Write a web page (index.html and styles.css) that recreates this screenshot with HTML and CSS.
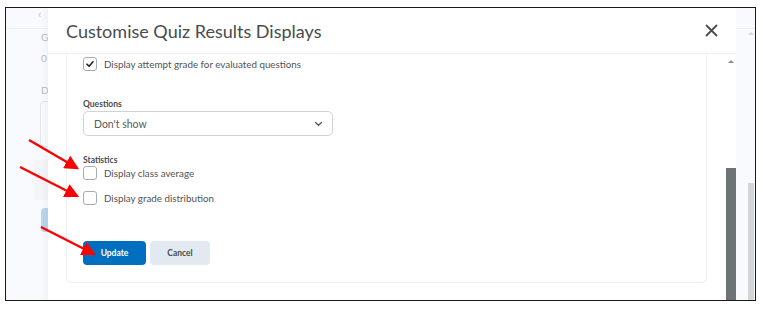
FILE: index.html
```html
<!DOCTYPE html>
<html lang="en">
<head>
    <meta charset="UTF-8">
    <meta name="viewport" content="width=device-width, initial-scale=1.0">
    <title>Customise Quiz Results Displays</title>
    <link rel="stylesheet" href="styles.css">
</head>
<body>
    <div class="frame">
        <div class="page-left">
            <span class="back">&lsaquo;</span>
            <span class="faint-line"></span>
            <span class="faint-letter l-g">G</span>
            <span class="faint-letter l-0">0</span>
            <span class="faint-letter l-d">D</span>
            <span class="faint-box"></span>
            <span class="faint-row"></span>
            <span class="faint-button"></span>
        </div>

        <div class="dialog">
            <div class="dialog-header">
                <h1>Customise Quiz Results Displays</h1>
                <button class="close" aria-label="Close">
                    <svg width="13" height="13" viewBox="0 0 13 13">
                        <path d="M1.5 1.5 L11.5 11.5 M11.5 1.5 L1.5 11.5" stroke="#494c4e" stroke-width="1.8" stroke-linecap="round" fill="none"/>
                    </svg>
                </button>
            </div>

            <div class="dialog-body">
                <div class="scroll-content">
                    <div class="card">
                        <label class="check-row">
                            <span class="checkbox checked">
                                <svg width="10" height="10" viewBox="0 0 10 10">
                                    <path d="M2 5.2 L4.1 7.3 L8 2.8" stroke="#202122" stroke-width="1.6" stroke-linecap="round" stroke-linejoin="round" fill="none"/>
                                </svg>
                            </span>
                            Display attempt grade for evaluated questions
                        </label>

                        <div class="field-label questions-label">Questions</div>
                        <div class="select">
                            <span>Don't show</span>
                            <svg width="9" height="6" viewBox="0 0 9 6">
                                <path d="M1.5 1.5 L4.5 4.3 L7.5 1.5" stroke="#565a5c" stroke-width="1.3" stroke-linecap="round" fill="none"/>
                            </svg>
                        </div>

                        <div class="field-label stats-label">Statistics</div>
                        <label class="check-row">
                            <span class="checkbox"></span>
                            Display class average
                        </label>
                        <label class="check-row second">
                            <span class="checkbox"></span>
                            Display grade distribution
                        </label>

                        <div class="buttons">
                            <button class="btn primary">Update</button>
                            <button class="btn">Cancel</button>
                        </div>
                    </div>
                </div>
                <div class="scrollbar">
                    <span class="arrow-up"></span>
                    <span class="thumb"></span>
                </div>
            </div>
        </div>

        <div class="page-right">
            <span class="faint-line"></span>
            <span class="arrow-up small"></span>
            <span class="thumb"></span>
        </div>

        <svg class="arrows" width="751" height="294" viewBox="0 0 751 294">
            <defs>
                <marker id="head" markerWidth="6" markerHeight="6" refX="5" refY="3" orient="auto" markerUnits="strokeWidth">
                    <path d="M0 0 L6 3 L0 6 Z" fill="#ff0000"/>
                </marker>
            </defs>
            <line x1="23" y1="132" x2="71" y2="160" stroke="#ff0000" stroke-width="2.4" marker-end="url(#head)"/>
            <line x1="14" y1="159" x2="71" y2="188" stroke="#ff0000" stroke-width="2.4" marker-end="url(#head)"/>
            <line x1="35" y1="219" x2="88" y2="246" stroke="#ff0000" stroke-width="2.4" marker-end="url(#head)"/>
        </svg>
    </div>
</body>
</html>
```

FILE: styles.css
```css
body {
    margin: 0;
    background-color: #fff;
    font-family: Lato, "Open Sans", Arial, sans-serif;
    color: #494c4e;
}

.frame {
    position: relative;
    display: flex;
    width: 749px;
    height: 292px;
    margin: 7px 0 0 5px;
    border: 1px solid #1a1a1a;
    background-color: #f9fafd;
    overflow: hidden;
}

/* page behind the dialog, mostly cut off */
.page-left {
    position: relative;
    width: 42px;
    flex-shrink: 0;
}

.page-left .back {
    position: absolute;
    left: 32px;
    top: 0;
    font-size: 12px;
    line-height: 12px;
    color: #c4c8cc;
}

.faint-line {
    position: absolute;
    left: 0;
    right: 0;
    top: 20px;
    border-top: 1px solid #eef0f3;
}

.faint-letter {
    position: absolute;
    left: 35px;
    font-size: 10px;
    color: #b8bcc0;
}

.l-g { top: 23px; }
.l-0 { top: 44px; }
.l-d { top: 76px; }

.faint-box {
    position: absolute;
    left: 34px;
    top: 93px;
    width: 14px;
    height: 44px;
    border: 1px solid #e3e6ea;
    border-radius: 4px;
}

.faint-row {
    position: absolute;
    left: 28px;
    top: 152px;
    width: 20px;
    height: 40px;
    background-color: #f3f5f9;
}

.faint-button {
    position: absolute;
    left: 35px;
    top: 200px;
    width: 14px;
    height: 24px;
    border-radius: 4px;
    background-color: #b9d6ef;
}

.dialog {
    position: relative;
    width: 688px;
    flex-shrink: 0;
    background-color: #fff;
    box-shadow: -3px 0 6px rgba(0, 0, 0, 0.04);
    display: flex;
    flex-direction: column;
}

.dialog-header {
    height: 45px;
    display: flex;
    align-items: center;
    justify-content: space-between;
    padding: 0 16px 0 18px;
    border-bottom: 1px solid #eff1f3;
}

.dialog-header h1 {
    margin: 0;
    font-size: 18px;
    font-weight: 400;
    color: #494c4e;
}

.close {
    border: none;
    background: none;
    padding: 0;
    width: 18px;
    height: 18px;
    display: flex;
    align-items: center;
    justify-content: center;
}

.dialog-body {
    flex: 1;
    display: flex;
    min-height: 0;
}

.scroll-content {
    width: 641px;
    padding-left: 18px;
}

.card {
    border: 1px solid #eef0f2;
    border-top: none;
    border-radius: 0 0 6px 6px;
    padding: 3px 16px 17px 16px;
}

.check-row {
    display: flex;
    align-items: center;
    gap: 7px;
    font-size: 9.8px;
    height: 14px;
    color: #505356;
}

.check-row.second {
    margin-top: 11px;
}

.checkbox {
    width: 12px;
    height: 12px;
    border: 1px solid #a7acb1;
    border-radius: 3px;
    display: flex;
    align-items: center;
    justify-content: center;
    background-color: #fff;
}

.field-label {
    font-size: 8.5px;
    font-weight: 700;
    line-height: 12px;
    color: #494c4e;
}

.questions-label {
    margin-top: 27px;
}

.stats-label {
    margin-top: 18px;
}

.select {
    box-sizing: border-box;
    width: 250px;
    height: 25px;
    margin-top: 1px;
    border: 1px solid #cfd4d9;
    border-radius: 5px;
    display: flex;
    align-items: center;
    justify-content: space-between;
    padding: 0 9px 0 10px;
    font-size: 10.5px;
    color: #565a5c;
}

.buttons {
    display: flex;
    gap: 4px;
    margin-top: 36px;
}

.btn {
    height: 24px;
    width: 60px;
    border: none;
    border-radius: 4px;
    background-color: #e3e9f1;
    color: #494c4e;
    font-family: Lato, "Open Sans", Arial, sans-serif;
    font-size: 8.5px;
    font-weight: 700;
    padding: 0;
}

.btn.primary {
    width: 63px;
    background-color: #006fbf;
    color: #fff;
}

.scrollbar {
    position: relative;
    flex: 1;
}

.arrow-up {
    position: absolute;
    left: 21px;
    top: 6px;
    width: 0;
    height: 0;
    border-left: 3px solid transparent;
    border-right: 3px solid transparent;
    border-bottom: 3px solid #8a8f94;
}

.scrollbar .thumb {
    position: absolute;
    right: 0;
    top: 114px;
    bottom: 0;
    width: 10px;
    background-color: #6e7376;
}

.page-right {
    position: relative;
    flex: 1;
}

.page-right .arrow-up.small {
    left: 12px;
    top: 24px;
    border-bottom-color: #d5d8db;
}

.page-right .thumb {
    position: absolute;
    right: 1px;
    top: 175px;
    bottom: 0;
    width: 6px;
    background-color: #d3d6d9;
}

.arrows {
    position: absolute;
    left: 0;
    top: 0;
    pointer-events: none;
}
```
